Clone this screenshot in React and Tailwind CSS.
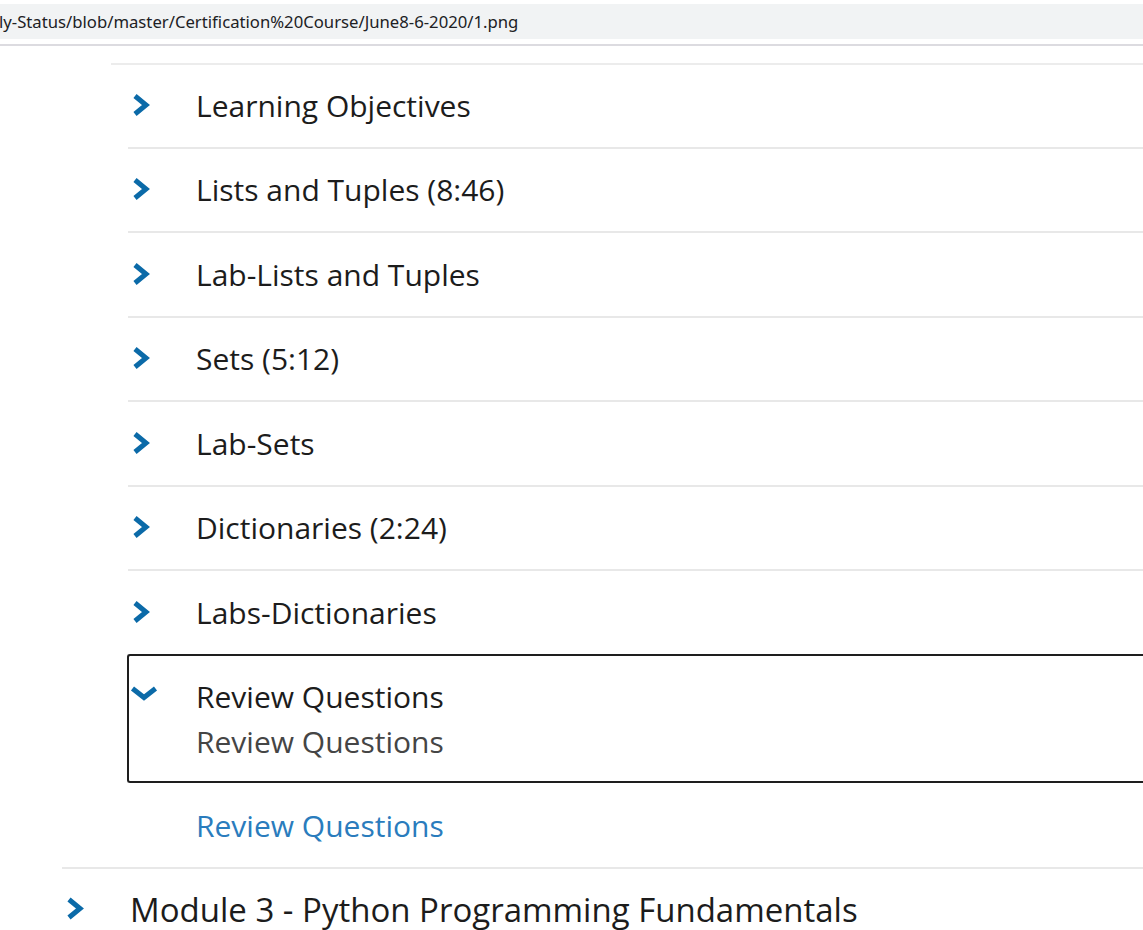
const items = [
  "Learning Objectives",
  "Lists and Tuples (8:46)",
  "Lab-Lists and Tuples",
  "Sets (5:12)",
  "Lab-Sets",
  "Dictionaries (2:24)",
  "Labs-Dictionaries",
];

function ChevronRight({ className }) {
  return (
    <svg viewBox="0 0 20 24" className={className} fill="none">
      <polyline
        points="4,3 15,12 4,21"
        stroke="#0b6aa8"
        strokeWidth="5"
        strokeLinejoin="miter"
        strokeLinecap="butt"
      />
    </svg>
  );
}

function ChevronDown({ className }) {
  return (
    <svg viewBox="0 0 28 15" className={className} fill="none">
      <polyline
        points="2.5,2.5 14,11.5 25.5,2.5"
        stroke="#0b6aa8"
        strokeWidth="5"
        strokeLinejoin="miter"
        strokeLinecap="butt"
      />
    </svg>
  );
}

export default function App() {
  return (
    <div className="w-[1143px] h-[930px] overflow-hidden bg-white font-['Open_Sans',sans-serif]">
      {/* browser address bar */}
      <div className="pt-[4px]">
        <div className="h-[35px] bg-[#f1f3f4] flex items-center">
          <span className="text-[16.7px] text-[#202124] font-['Noto_Sans',sans-serif] whitespace-nowrap -ml-[1px]">
            ly-Status/blob/master/Certification%20Course/June8-6-2020/1.png
          </span>
        </div>
        <div className="mt-[5px] h-[2px] bg-[#dcdbe0]" />
      </div>

      <div className="pt-[17px]">
        <div className="ml-[111px] h-[2px] bg-[#ececec]" />
        <ul className="ml-[128px] -mt-[1px]">
          {items.map((t) => (
            <li
              key={t}
              className="h-[84.5px] border-b-2 border-[#e8e8e8] flex items-center"
            >
              <ChevronRight className="w-[20px] h-[24px] ml-[3px] -mt-[1px]" />
              <span className="ml-[45px] text-[30px] text-[#1c1c1c] leading-none mt-[1px]">
                {t}
              </span>
            </li>
          ))}
        </ul>

        <div className="ml-[127px] -mt-[2px] h-[129px] border-2 border-r-0 border-[#1e1e1e] rounded-l-[3px] flex">
          <div className="w-[67px] pt-[30px] pl-[1px]">
            <ChevronDown className="w-[28px] h-[15px]" />
          </div>
          <div className="pt-[18px] text-[30px] leading-[45px]">
            <div className="text-[#1c1c1c]">Review Questions</div>
            <div className="text-[#454545]">Review Questions</div>
          </div>
        </div>

        <div className="ml-[196px] h-[84px] flex items-center text-[30px] text-[#2a7cbd]">
          <span className="mt-[2px]">Review Questions</span>
        </div>

        <div className="ml-[62px] h-[2px] bg-[#e8e8e8]" />

        <div className="ml-[62px] h-[84px] flex items-start pt-[24px]">
          <ChevronRight className="w-[20px] h-[25px] ml-[3px] mt-[3px]" />
          <span className="ml-[45px] text-[33px] text-[#1c1c1c] leading-none">
            Module 3 - Python Programming Fundamentals
          </span>
        </div>
      </div>
    </div>
  );
}
